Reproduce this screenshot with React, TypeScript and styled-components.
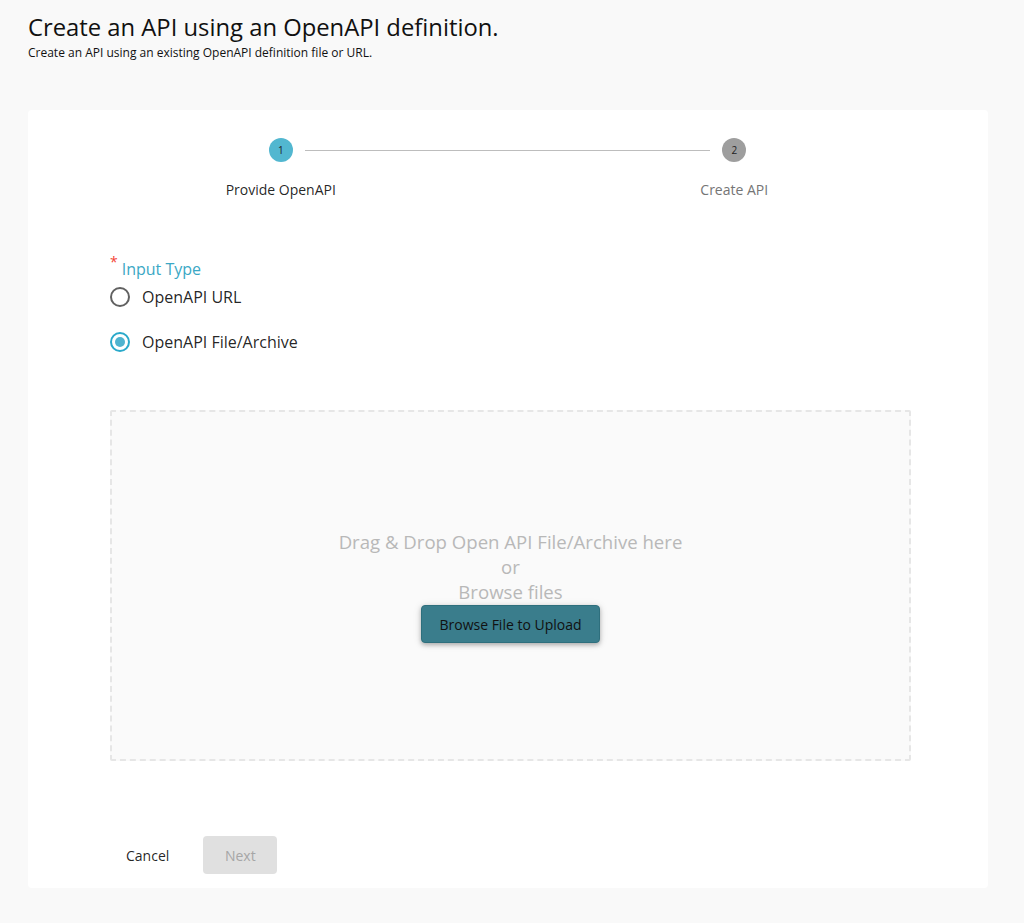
import React, { useState } from "react";
import styled, { createGlobalStyle } from "styled-components";

const GlobalStyle = createGlobalStyle`
  html, body {
    margin: 0;
    padding: 0;
    background: #f9f9f9;
    font-family: "Open Sans", "Noto Sans", sans-serif;
    color: rgba(0, 0, 0, 0.87);
  }
  * { box-sizing: border-box; }
`;

const Page = styled.div`
  padding: 12px 36px 35px 28px;
  min-height: 923px;
`;

const Title = styled.h1`
  margin: 0;
  font-size: 23.8px;
  font-weight: 400;
  line-height: 30px;
  color: #111;
`;

const Subtitle = styled.p`
  margin: 3px 0 0 0;
  font-size: 12px;
  line-height: 16px;
  color: #111;
`;

const Card = styled.div`
  margin-top: 49px;
  background: #fff;
  border-radius: 4px;
  padding: 28px 27px 14px 26px;
`;

const Stepper = styled.div`
  display: grid;
  grid-template-columns: 1fr 1fr;
  width: 907px;
`;

const Step = styled.div`
  display: flex;
  flex-direction: column;
  align-items: center;
`;

const StepTrack = styled.div`
  display: flex;
  align-items: center;
  width: 100%;
  height: 24px;
`;

const Half = styled.div<{ $line?: boolean; $side: "left" | "right" }>`
  flex: 1;
  height: 1px;
  background: ${(p) => (p.$line ? "#bdbdbd" : "transparent")};
  margin-left: ${(p) => (p.$side === "right" ? "12px" : "0")};
  margin-right: ${(p) => (p.$side === "left" ? "12px" : "0")};
`;

const StepCircle = styled.div<{ $active?: boolean }>`
  width: 24px;
  height: 24px;
  border-radius: 50%;
  background: ${(p) => (p.$active ? "#52b7d0" : "#9e9e9e")};
  color: #222;
  font-size: 10px;
  display: flex;
  align-items: center;
  justify-content: center;
  flex: none;
`;

const StepLabel = styled.div<{ $active?: boolean }>`
  margin-top: 18px;
  font-size: 14px;
  line-height: 20px;
  color: ${(p) => (p.$active ? "rgba(0,0,0,0.87)" : "#757575")};
`;

const Form = styled.div`
  padding-left: 56px;
  padding-right: 50px;
  margin-top: 58px;
`;

const FieldLabel = styled.div`
  display: flex;
  align-items: flex-start;
  font-size: 16px;
  line-height: 22px;
  color: #3ba8c5;
`;

const Asterisk = styled.span`
  color: #f44336;
  font-size: 14px;
  line-height: 14px;
  margin-right: 4px;
  margin-top: -3px;
`;

const RadioGroup = styled.div`
  display: flex;
  flex-direction: column;
  gap: 23px;
  margin-top: 6px;
`;

const RadioRow = styled.label`
  display: flex;
  align-items: center;
  gap: 12px;
  font-size: 16px;
  line-height: 22px;
  color: rgba(0, 0, 0, 0.87);
  cursor: pointer;
`;

const RadioRing = styled.span<{ $checked?: boolean }>`
  width: 20px;
  height: 20px;
  border-radius: 50%;
  border: 2px solid ${(p) => (p.$checked ? "#2aa9ca" : "#616161")};
  display: flex;
  align-items: center;
  justify-content: center;
  flex: none;
  &::after {
    content: "";
    width: 10px;
    height: 10px;
    border-radius: 50%;
    background: ${(p) => (p.$checked ? "#4fb3cf" : "transparent")};
  }
`;

const DropZone = styled.div`
  margin-top: 57px;
  height: 351px;
  border: 2px dashed #e6e6e6;
  background: #fafafa;
  border-radius: 2px;
  display: flex;
  flex-direction: column;
  align-items: center;
  justify-content: center;
  padding-top: 1px;
`;

const DropText = styled.div`
  font-size: 18.6px;
  line-height: 25px;
  color: #b8b8b8;
  text-align: center;
`;

const UploadButton = styled.button`
  margin-top: 1px;
  width: 179px;
  height: 38px;
  background: #3a7d8c;
  border: 1px solid #2e6f7d;
  border-radius: 4px;
  color: #111;
  font-family: "Open Sans", "Noto Sans", sans-serif;
  font-size: 14px;
  box-shadow: 0 2px 4px rgba(0, 0, 0, 0.25), 0 1px 8px rgba(0, 0, 0, 0.12);
  cursor: pointer;
`;

const Actions = styled.div`
  display: flex;
  align-items: center;
  gap: 22px;
  margin-top: 75px;
  padding-left: 60px;
`;

const TextButton = styled.button`
  background: none;
  border: none;
  font-family: "Open Sans", "Noto Sans", sans-serif;
  font-size: 14px;
  color: rgba(0, 0, 0, 0.87);
  padding: 8px 12px;
  height: 38px;
`;

const DisabledButton = styled.button`
  width: 74px;
  height: 38px;
  background: #e0e0e0;
  border: none;
  border-radius: 4px;
  font-family: "Open Sans", "Noto Sans", sans-serif;
  font-size: 14px;
  color: #a6a6a6;
`;

export default function App() {
  const [type, setType] = useState<"url" | "file">("file");
  return (
    <>
      <GlobalStyle />
      <Page>
        <Title>Create an API using an OpenAPI definition.</Title>
        <Subtitle>Create an API using an existing OpenAPI definition file or URL.</Subtitle>
        <Card>
          <Stepper>
            <Step>
              <StepTrack>
                <Half $side="left" />
                <StepCircle $active>1</StepCircle>
                <Half $side="right" $line />
              </StepTrack>
              <StepLabel $active>Provide OpenAPI</StepLabel>
            </Step>
            <Step>
              <StepTrack>
                <Half $side="left" $line />
                <StepCircle>2</StepCircle>
                <Half $side="right" />
              </StepTrack>
              <StepLabel>Create API</StepLabel>
            </Step>
          </Stepper>
          <Form>
            <FieldLabel>
              <Asterisk>*</Asterisk>Input Type
            </FieldLabel>
            <RadioGroup>
              <RadioRow onClick={() => setType("url")}>
                <RadioRing $checked={type === "url"} />
                OpenAPI URL
              </RadioRow>
              <RadioRow onClick={() => setType("file")}>
                <RadioRing $checked={type === "file"} />
                OpenAPI File/Archive
              </RadioRow>
            </RadioGroup>
            <DropZone>
              <DropText>Drag &amp; Drop Open API File/Archive here</DropText>
              <DropText>or</DropText>
              <DropText>Browse files</DropText>
              <UploadButton>Browse File to Upload</UploadButton>
            </DropZone>
          </Form>
          <Actions>
            <TextButton>Cancel</TextButton>
            <DisabledButton disabled>Next</DisabledButton>
          </Actions>
        </Card>
      </Page>
    </>
  );
}
